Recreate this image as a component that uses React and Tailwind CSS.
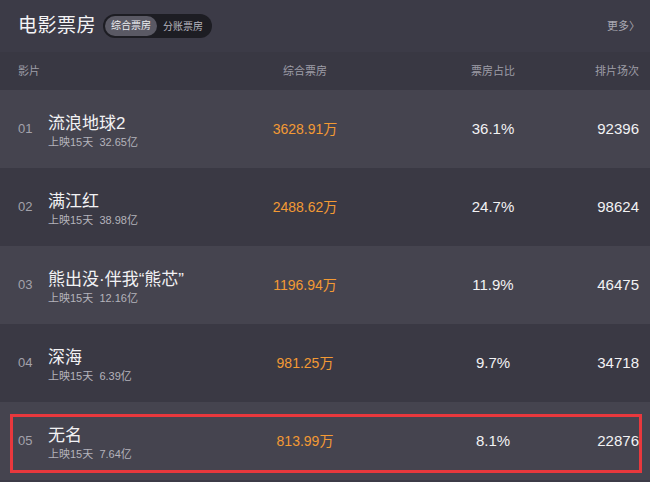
const films = [
  { rank: "01", name: "流浪地球2", days: "上映15天", total: "32.65亿", box: "3628.91万", pct: "36.1%", shows: "92396" },
  { rank: "02", name: "满江红", days: "上映15天", total: "38.98亿", box: "2488.62万", pct: "24.7%", shows: "98624" },
  { rank: "03", name: "熊出没·伴我“熊芯”", days: "上映15天", total: "12.16亿", box: "1196.94万", pct: "11.9%", shows: "46475" },
  { rank: "04", name: "深海", days: "上映15天", total: "6.39亿", box: "981.25万", pct: "9.7%", shows: "34718" },
  { rank: "05", name: "无名", days: "上映15天", total: "7.64亿", box: "813.99万", pct: "8.1%", shows: "22876" },
];

const cols = "grid grid-cols-[30px_202px_110px_80px_106px_1fr] items-center pl-[18px] pr-[11px]";

function Row({ film, light, marked }) {
  return (
    <div className={`relative h-[78px] ${cols} ${light ? "bg-[#45444f]" : "bg-[#3a3944]"}`}>
      <span className="text-[13px] text-[#a3a2ab]">{film.rank}</span>
      <div className="flex flex-col pt-[4px]">
        <span className="text-[17px] leading-[22px] text-[#f2f2f4]">{film.name}</span>
        <span className="text-[11px] leading-[14px] text-[#b4b3bb]">
          {film.days}&nbsp;&nbsp;{film.total}
        </span>
      </div>
      <span className="text-center text-[14px] text-[#f39a34]">{film.box}</span>
      <span />
      <span className="text-center text-[15px] text-[#f2f2f4]">{film.pct}</span>
      <span className="text-right text-[15px] text-[#f2f2f4]">{film.shows}</span>
      {marked && (
        <div className="absolute left-[10px] right-[8px] top-[12px] h-[59px] border-[3px] border-[#e8383d]" />
      )}
    </div>
  );
}

export default function App() {
  return (
    <div
      className="w-[650px] h-[482px] overflow-hidden bg-[#3c3b47]"
      style={{ fontFamily: '"Liberation Sans", "Noto Sans CJK SC", sans-serif' }}
    >
      <div className="h-[52px] flex items-center pl-[18px] pr-[10px]">
        <h1 className="text-[19px] text-[#f4f4f6] tracking-[0.5px]">电影票房</h1>
        <div className="ml-[7px] flex items-center h-[24px] rounded-full bg-[#1d1d23] p-[2px]">
          <span className="h-[20px] px-[6px] rounded-full bg-[#5a5964] text-[10px] leading-[20px] text-[#ececf0]">
            综合票房
          </span>
          <span className="pl-[6px] pr-[7px] text-[10px] text-[#b8b7bf]">分账票房</span>
        </div>
        <span className="ml-auto text-[11px] text-[#a9a8b1]">更多〉</span>
      </div>
      <div className={`h-[38px] bg-[#393843] text-[11px] text-[#9e9da7] ${cols}`}>
        <span className="col-span-2">影片</span>
        <span className="text-center">综合票房</span>
        <span />
        <span className="text-center">票房占比</span>
        <span className="text-right">排片场次</span>
      </div>
      {films.map((f, i) => (
        <Row key={f.rank} film={f} light={i % 2 === 0} marked={i === 4} />
      ))}
    </div>
  );
}
